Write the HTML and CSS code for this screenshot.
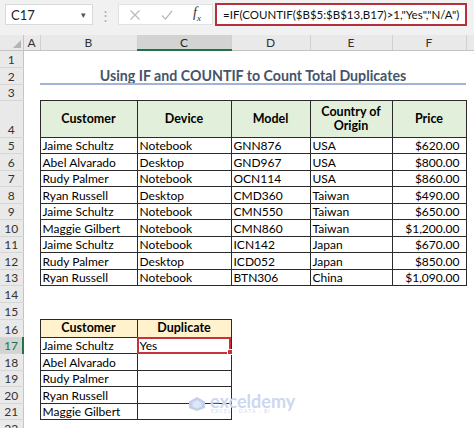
FILE: index.html
```html
<!DOCTYPE html>
<html lang="en">
<head>
    <meta charset="UTF-8">
    <title>Using IF and COUNTIF to Count Total Duplicates</title>
    <link rel="stylesheet" href="styles.css">
</head>
<body>
    <div class="formula-bar">
        <div class="name-box">
            <span>C17</span>
            <span class="caret">&#9662;</span>
        </div>
        <div class="grip">&#8942;</div>
        <div class="fx-buttons">
            <svg class="btn-icon" viewBox="0 0 12 12" width="12" height="12">
                <path d="M1.5 1.5 L10.5 10.5 M10.5 1.5 L1.5 10.5" stroke="#b9b9b9" stroke-width="1.2" fill="none"/>
            </svg>
            <svg class="btn-icon" viewBox="0 0 12 12" width="12" height="12">
                <path d="M1 6.5 L4.5 10 L11 2" stroke="#b9b9b9" stroke-width="1.2" fill="none"/>
            </svg>
            <span class="fx">f<sub>x</sub></span>
        </div>
        <div class="formula">=IF(COUNTIF($B$5:$B$13,B17)&gt;1,"Yes","N/A")</div>
    </div>

    <div class="sheet">
        <table class="grid">
            <colgroup>
                <col class="c-row">
                <col class="c-a">
                <col class="c-b">
                <col class="c-c">
                <col class="c-d">
                <col class="c-e">
                <col class="c-f">
                <col class="c-g">
            </colgroup>
            <thead>
                <tr>
                    <th class="corner"><span class="tri"></span></th>
                    <th class="col-head">A</th>
                    <th class="col-head">B</th>
                    <th class="col-head selected">C</th>
                    <th class="col-head">D</th>
                    <th class="col-head">E</th>
                    <th class="col-head">F</th>
                    <th class="col-head">G</th>
                </tr>
            </thead>
            <tbody>
                <tr class="r-17"><th class="row-head">1</th><td></td><td></td><td></td><td></td><td></td><td></td><td></td></tr>
                <tr class="r-17"><th class="row-head">2</th><td></td><td class="title" colspan="5">Using IF and COUNTIF to Count Total Duplicates</td><td></td></tr>
                <tr class="r-16"><th class="row-head">3</th><td></td><td></td><td></td><td></td><td></td><td></td><td></td></tr>
                <tr class="r-head">
                    <th class="row-head">4</th><td></td>
                    <td class="box hd green">Customer</td>
                    <td class="box hd green">Device</td>
                    <td class="box hd green">Model</td>
                    <td class="box hd green">Country of<br>Origin</td>
                    <td class="box hd green">Price</td>
                    <td></td>
                </tr>
                <tr class="r-data"><th class="row-head">5</th><td></td><td class="box">Jaime Schultz</td><td class="box">Notebook</td><td class="box">GNN876</td><td class="box">USA</td><td class="box num">$620.00</td><td></td></tr>
                <tr class="r-data"><th class="row-head">6</th><td></td><td class="box">Abel Alvarado</td><td class="box">Desktop</td><td class="box">GND967</td><td class="box">USA</td><td class="box num">$800.00</td><td></td></tr>
                <tr class="r-data"><th class="row-head">7</th><td></td><td class="box">Rudy Palmer</td><td class="box">Notebook</td><td class="box">OCN114</td><td class="box">USA</td><td class="box num">$860.00</td><td></td></tr>
                <tr class="r-data"><th class="row-head">8</th><td></td><td class="box">Ryan Russell</td><td class="box">Desktop</td><td class="box">CMD360</td><td class="box">Taiwan</td><td class="box num">$490.00</td><td></td></tr>
                <tr class="r-data"><th class="row-head">9</th><td></td><td class="box">Jaime Schultz</td><td class="box">Notebook</td><td class="box">CMN550</td><td class="box">Taiwan</td><td class="box num">$650.00</td><td></td></tr>
                <tr class="r-data"><th class="row-head">10</th><td></td><td class="box">Maggie Gilbert</td><td class="box">Notebook</td><td class="box">CMN860</td><td class="box">Taiwan</td><td class="box num">$1,200.00</td><td></td></tr>
                <tr class="r-data"><th class="row-head">11</th><td></td><td class="box">Jaime Schultz</td><td class="box">Notebook</td><td class="box">ICN142</td><td class="box">Japan</td><td class="box num">$670.00</td><td></td></tr>
                <tr class="r-data"><th class="row-head">12</th><td></td><td class="box">Rudy Palmer</td><td class="box">Desktop</td><td class="box">ICD052</td><td class="box">Japan</td><td class="box num">$850.00</td><td></td></tr>
                <tr class="r-data"><th class="row-head">13</th><td></td><td class="box">Ryan Russell</td><td class="box">Notebook</td><td class="box">BTN306</td><td class="box">China</td><td class="box num">$1,090.00</td><td></td></tr>
                <tr class="r-data"><th class="row-head">14</th><td></td><td></td><td></td><td></td><td></td><td></td><td></td></tr>
                <tr class="r-17"><th class="row-head">15</th><td></td><td></td><td></td><td></td><td></td><td></td><td></td></tr>
                <tr class="r-18">
                    <th class="row-head">16</th><td></td>
                    <td class="box hd yellow">Customer</td>
                    <td class="box hd yellow">Duplicate</td>
                    <td></td><td></td><td></td><td></td>
                </tr>
                <tr class="r-data2"><th class="row-head active">17</th><td></td><td class="box">Jaime Schultz</td><td class="box current">Yes<span class="handle"></span></td><td></td><td></td><td></td><td></td></tr>
                <tr class="r-data2"><th class="row-head">18</th><td></td><td class="box">Abel Alvarado</td><td class="box"></td><td></td><td></td><td></td><td></td></tr>
                <tr class="r-data2"><th class="row-head">19</th><td></td><td class="box">Rudy Palmer</td><td class="box"></td><td></td><td></td><td></td><td></td></tr>
                <tr class="r-data2"><th class="row-head">20</th><td></td><td class="box">Ryan Russell</td><td class="box"></td><td></td><td></td><td></td><td></td></tr>
                <tr class="r-data2"><th class="row-head">21</th><td></td><td class="box">Maggie Gilbert</td><td class="box"></td><td></td><td></td><td></td><td></td></tr>
                <tr class="r-17"><th class="row-head">22</th><td></td><td></td><td></td><td></td><td></td><td></td><td></td></tr>
            </tbody>
        </table>

        <!-- watermark -->
        <div class="watermark">
            <svg viewBox="0 0 18 16" width="18" height="16">
                <path d="M9 1 L17 5.5 L17 12 L9 15 L1 12 L1 5.5 Z" fill="#c3cfec"/>
                <path d="M9 4 L13.5 6.5 L13.5 10.5 L9 12.5 L4.5 10.5 L4.5 6.5 Z" fill="#dfe6f6"/>
            </svg>
            <div class="wm-text">
                <span class="wm-name">exceldemy</span>
                <span class="wm-sub">EXCEL · DATA · BI</span>
            </div>
        </div>
    </div>
</body>
</html>
```

FILE: styles.css
```css
body {
    margin: 0;
    width: 474px;
    height: 428px;
    overflow: hidden;
    background: #ffffff;
    font-family: Lato, "Liberation Sans", sans-serif;
    color: #000;
}

/* formula bar */
.formula-bar {
    display: flex;
    align-items: center;
    height: 35px;
    padding: 0 7px 6px 5px;
    box-sizing: border-box;
    background: #f1f1f1;
}

.name-box {
    display: flex;
    align-items: center;
    justify-content: space-between;
    width: 88px;
    height: 21px;
    box-sizing: border-box;
    padding: 0 6px 0 5px;
    background: #fff;
    border: 1px solid #dadada;
    font-size: 13px;
    color: #222;
}

.caret {
    font-size: 9px;
    color: #555;
}

.grip {
    width: 25px;
    text-align: center;
    color: #a8a8a8;
    font-size: 13px;
}

.fx-buttons {
    display: flex;
    align-items: center;
    gap: 20px;
    width: 95px;
    height: 21px;
    box-sizing: border-box;
    padding-left: 10px;
    background: #fff;
    border: 1px solid #e2e2e2;
}

.fx {
    font-family: "Liberation Serif", serif;
    font-style: italic;
    font-size: 14px;
    color: #333;
    line-height: 1;
}

.fx sub {
    font-size: 9px;
}

.formula {
    flex: 1;
    height: 23px;
    margin-left: 2px;
    box-sizing: border-box;
    padding: 3px 0 0 6px;
    background: #fff;
    border: 2px solid #b3303c;
    font-size: 11.5px;
    color: #111;
    white-space: nowrap;
    overflow: hidden;
}

/* sheet */
.sheet {
    position: relative;
    overflow: hidden;
}

.grid {
    border-collapse: collapse;
    table-layout: fixed;
    width: 506px;
    font-size: 12px;
}

.c-row { width: 23px; }
.c-a { width: 17px; }
.c-b { width: 97px; }
.c-c { width: 94px; }
.c-d { width: 79px; }
.c-e { width: 82px; }
.c-f { width: 74px; }
.c-g { width: 40px; }

.grid td, .grid th {
    box-sizing: border-box;
    padding: 0;
    overflow: hidden;
    white-space: nowrap;
}

.col-head {
    height: 15px;
    background: #e9e9e9;
    border-right: 1px solid #d0d0d0;
    border-bottom: 1px solid #c4c4c4;
    font-weight: normal;
    font-size: 12px;
    line-height: 13px;
    color: #333;
    text-align: center;
}

.col-head.selected {
    background: #d3d3d3;
    border-bottom: 2px solid #217346;
    color: #262626;
}

.corner {
    position: relative;
    background: #e9e9e9;
    border-right: 1px solid #c4c4c4;
    border-bottom: 1px solid #c4c4c4;
}

.tri {
    position: absolute;
    right: 2px;
    bottom: 2px;
    width: 0;
    height: 0;
    border-left: 8px solid transparent;
    border-bottom: 8px solid #b4b4b4;
}

.row-head {
    background: #e9e9e9;
    border-right: 1px solid #c4c4c4;
    border-bottom: 1px solid #d6d6d6;
    font-weight: normal;
    font-size: 12px;
    line-height: 14px;
    color: #333;
    text-align: center;
    vertical-align: bottom;
}

.row-head.active {
    background: #d3d3d3;
    border-right: 2px solid #217346;
    color: #217346;
}

.r-16 td, .r-16 th { height: 16px; }
.r-17 td, .r-17 th { height: 17px; }
.r-18 td, .r-18 th { height: 18px; }
.r-head td, .r-head th { height: 37px; }
.r-data td, .r-data th { height: 16.5px; }
.r-data2 td, .r-data2 th { height: 16.6px; }

.title {
    text-align: center;
    font-weight: bold;
    font-size: 14.2px;
    line-height: 15px;
    color: #44546a;
    border-bottom: 2px solid #a4b2d8;
    vertical-align: bottom;
}

.box {
    border: 1px solid #2b2b2b;
    padding: 0 2px !important;
    line-height: 14px;
    vertical-align: bottom;
}

.box.hd {
    text-align: center;
    vertical-align: middle;
    font-weight: bold;
    font-size: 12.5px;
}

.green { background: #e2efda; }
.yellow { background: #fff2cc; }

.box.num {
    text-align: right;
    padding-right: 6px !important;
}

.current {
    position: relative;
    outline: 2px solid #c8323c;
    outline-offset: -2px;
    overflow: visible !important;
}

.handle {
    position: absolute;
    right: -2px;
    bottom: -2px;
    width: 4px;
    height: 4px;
    background: #c8323c;
    border: 1px solid #fff;
}

.watermark {
    position: absolute;
    left: 188px;
    top: 359px;
    display: flex;
    align-items: center;
    gap: 4px;
}

.wm-text {
    display: flex;
    flex-direction: column;
    line-height: 1;
}

.wm-name {
    font-size: 18px;
    font-weight: bold;
    color: #cdd7f0;
    line-height: 15px;
}

.wm-sub {
    font-size: 5px;
    color: #d3d9e8;
    letter-spacing: 1.2px;
    padding-left: 1px;
}
```
